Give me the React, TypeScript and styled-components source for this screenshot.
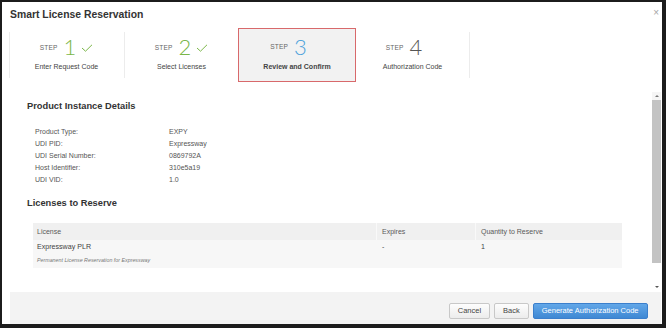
import React from "react"
import styled, { createGlobalStyle, css } from "styled-components"

const GlobalStyle = createGlobalStyle`
  html, body {
    margin: 0;
    padding: 0;
    background: #fff;
  }
  body {
    font-family: "Liberation Sans", Arial, sans-serif;
  }
`

type StepState = 'done' | 'current' | 'todo'

interface StepProps {
  state: StepState
}

const Frame = styled.div`
  width: 666px;
  height: 328px;
  box-sizing: border-box;
  border-style: solid;
  border-color: #1c1c1c;
  border-width: 2px 4px 4px 2px;
  display: flex;
  flex-direction: column;
  padding: 0 1px 0 8px;
  background: #fff;
  overflow: hidden;
`

const TitleBar = styled.div`
  display: flex;
  justify-content: space-between;
  align-items: flex-start;
  padding: 6px 1px 7px 0;
  height: 13px;
`

const Title = styled.h1`
  margin: 0;
  font-size: 10.4px;
  line-height: 13px;
  font-weight: bold;
  color: #333;
`

const Close = styled.span`
  font-size: 10px;
  line-height: 9px;
  color: #a5a5a5;
  margin-right: 1px;
`

const Steps = styled.div`
  display: flex;
  height: 54px;
  margin-left: -1px;
`

const Step = styled.div<StepProps>`
  position: relative;
  width: 115px;
  box-sizing: border-box;
  display: flex;
  flex-direction: column;
  align-items: center;
  padding-top: 8px;

  &::before {
    content: "";
    position: absolute;
    left: 0;
    top: 4px;
    bottom: 4px;
    width: 1px;
    background: #ececec;
  }
  &:last-child::after {
    content: "";
    position: absolute;
    right: 0;
    top: 4px;
    bottom: 4px;
    width: 1px;
    background: #ececec;
  }

  ${props => props.state === 'current' && css`
    width: 118px;
    margin: 0 -1px 0 -1px;
    z-index: 1;
    background: #f2f2f2;
    border: 1.5px solid #d8696b;
    padding-top: 6.5px;
    &::before { display: none; }
  `}
`

const StepTop = styled.div`
  display: flex;
  align-items: center;
  height: 22px;
`

const StepWord = styled.span`
  font-size: 6.6px;
  color: #666;
  letter-spacing: 0.1px;
  margin-right: 6px;
`

const stepColors: Record<StepState, string> = {
  done: '#7ab648',
  current: '#4fa3dc',
  todo: '#555',
}

const StepNumber = styled.span<StepProps>`
  font-family: "Lato", "Liberation Sans", sans-serif;
  font-weight: 300;
  font-size: 22px;
  line-height: 22px;
  color: ${props => stepColors[props.state]};
`

const Check = styled.svg<{ shown: boolean }>`
  margin-left: 5px;
  margin-top: 2px;
  visibility: ${props => props.shown ? 'visible' : 'hidden'};
`

const StepLabel = styled.div<StepProps>`
  margin-top: 4px;
  font-size: 7px;
  line-height: 10px;
  color: #444;
  font-weight: ${props => props.state === 'current' ? 'bold' : 'normal'};
`

const Body = styled.div`
  margin-top: 10px;
  height: 200px;
  display: flex;
`

const Content = styled.div`
  flex: 1;
  overflow: hidden;
  padding: 8px 0 0 17px;
`

const Heading = styled.h2<{ gap?: number }>`
  margin: ${props => props.gap || 0}px 0 0 0;
  font-size: 9.3px;
  line-height: 12px;
  font-weight: bold;
  color: #333;
`

const Details = styled.div`
  display: grid;
  grid-template-columns: 134px auto;
  grid-auto-rows: 12px;
  margin: 13.5px 0 0 8px;
  font-size: 7px;
  line-height: 12px;
  color: #555;
`

const Table = styled.div`
  margin: 14px 0 0 6px;
  width: 589px;
  display: grid;
  grid-template-columns: 343px 99px 1fr;
`

const HeadCell = styled.div<{ first?: boolean }>`
  height: 17.5px;
  line-height: 17.5px;
  background: #f0f0f0;
  font-size: 7px;
  color: #5a5a5a;
  padding-left: ${props => props.first ? 4 : 5}px;
  border-left: ${props => props.first ? 'none' : '1px solid #f9f9f9'};
`

const Cell = styled.div<{ first?: boolean }>`
  height: 27.5px;
  box-sizing: border-box;
  background: #f7f7f7;
  padding: 3px 0 0 ${props => props.first ? 4 : 6}px;
  font-size: 7.1px;
  line-height: 9px;
  color: #444;
`

const SubText = styled.div`
  margin-top: 4.5px;
  font-size: 5.3px;
  line-height: 7px;
  font-style: italic;
  color: #777;
`

const Rail = styled.div`
  width: 9px;
  display: flex;
  flex-direction: column;
  background: #fff;
`

const RailButton = styled.div<{ dir: 'up' | 'down' }>`
  height: ${props => props.dir === 'up' ? 8 : 10}px;
  display: flex;
  align-items: center;
  justify-content: center;
  background: ${props => props.dir === 'up' ? '#f5f5f5' : '#fff'};
  &::after {
    content: "";
    border-left: 2px solid transparent;
    border-right: 2px solid transparent;
    ${props => props.dir === 'up'
      ? 'border-bottom: 2px solid #777;'
      : 'border-top: 2px solid #555;'}
  }
`

const Thumb = styled.div`
  height: 163px;
  background: #c3c3c3;
`

const Track = styled.div`
  flex: 1;
`

const Footer = styled.div`
  height: 32px;
  box-sizing: border-box;
  background: #f3f3f3;
  display: flex;
  justify-content: flex-end;
  align-items: flex-start;
  gap: 4px;
  padding: 11px 13.5px 0 0;
`

const Button = styled.button<{ primary?: boolean }>`
  height: 15.5px;
  box-sizing: border-box;
  padding: 0 8px;
  font-family: "Liberation Sans", Arial, sans-serif;
  font-size: 7.5px;
  line-height: 13px;
  border-radius: 2px;
  color: ${props => props.primary ? '#fff' : '#444'};
  border: 1px solid ${props => props.primary ? '#3b7fcc' : '#c8c8c8'};
  background: ${props => props.primary
    ? 'linear-gradient(#62a7e8, #3f88d3)'
    : 'linear-gradient(#fdfdfd, #ececec)'};
`

const steps: { state: StepState; label: string }[] = [
  { state: 'done', label: 'Enter Request Code' },
  { state: 'done', label: 'Select Licenses' },
  { state: 'current', label: 'Review and Confirm' },
  { state: 'todo', label: 'Authorization Code' },
]

const details = [
  ['Product Type:', 'EXPY'],
  ['UDI PID:', 'Expressway'],
  ['UDI Serial Number:', '0869792A'],
  ['Host Identifier:', '310e5a19'],
  ['UDI VID:', '1.0'],
]

export default function App() {
  return (
    <>
      <GlobalStyle />
      <Frame>
        <TitleBar>
          <Title>Smart License Reservation</Title>
          <Close>×</Close>
        </TitleBar>

        <Steps>
          {steps.map((s, i) => (
            <Step key={s.label} state={s.state}>
              <StepTop>
                <StepWord>STEP</StepWord>
                <StepNumber state={s.state}>{i + 1}</StepNumber>
                <Check shown={s.state === 'done'} width="12" height="8" viewBox="0 0 12 8">
                  <polyline points="1,4 4.5,7.2 11,0.8" fill="none" stroke="#7ab648" strokeWidth="1" />
                </Check>
              </StepTop>
              <StepLabel state={s.state}>{s.label}</StepLabel>
            </Step>
          ))}
        </Steps>

        <Body>
          <Content>
            <Heading>Product Instance Details</Heading>
            <Details>
              {details.map(([k, v]) => (
                <React.Fragment key={k}>
                  <span>{k}</span>
                  <span>{v}</span>
                </React.Fragment>
              ))}
            </Details>

            <Heading gap={11}>Licenses to Reserve</Heading>
            <Table>
              <HeadCell first>License</HeadCell>
              <HeadCell>Expires</HeadCell>
              <HeadCell>Quantity to Reserve</HeadCell>
              <Cell first>
                Expressway PLR
                <SubText>Permanent License Reservation for Expressway</SubText>
              </Cell>
              <Cell>-</Cell>
              <Cell>1</Cell>
            </Table>
          </Content>
          <Rail>
            <RailButton dir="up" />
            <Thumb />
            <Track />
            <RailButton dir="down" />
          </Rail>
        </Body>

        <Footer>
          <Button>Cancel</Button>
          <Button>Back</Button>
          <Button primary>Generate Authorization Code</Button>
        </Footer>
      </Frame>
    </>
  )
}
